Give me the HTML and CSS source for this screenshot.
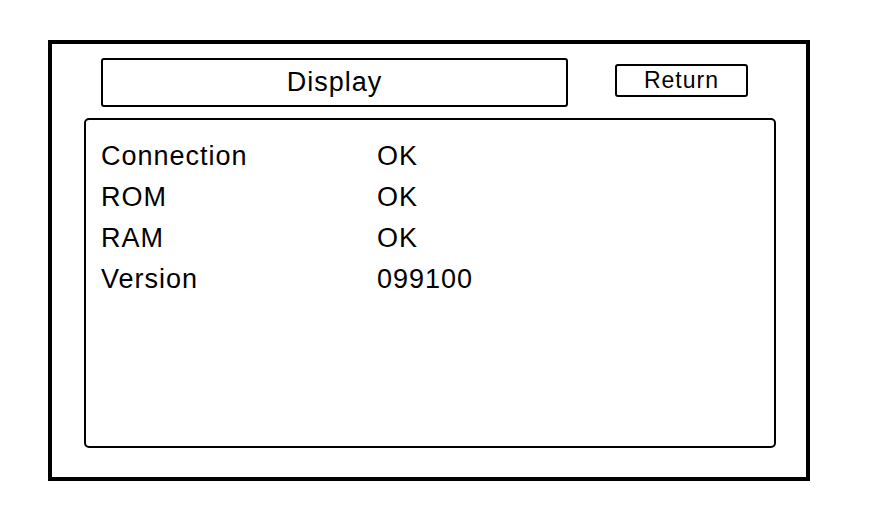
FILE: index.html
```html
<!DOCTYPE html>
<html lang="en">

<head>
    <meta charset="UTF-8">
    <meta name="viewport" content="width=device-width, initial-scale=1.0">
    <title>Display</title>
    <link rel="stylesheet" href="styles.css">
</head>

<body>

    <div class="frame">
        <div class="header">
            <div class="title">Display</div>
            <div class="return">Return</div>
        </div>
        <div class="panel">
            <ul class="status">
                <li><span class="label">Connection</span><span class="value">OK</span></li>
                <li><span class="label">ROM</span><span class="value">OK</span></li>
                <li><span class="label">RAM</span><span class="value">OK</span></li>
                <li><span class="label">Version</span><span class="value">099100</span></li>
            </ul>
        </div>
    </div>

</body>

</html>
```

FILE: styles.css
```css
html,
body,
ul {
    margin: 0;
    padding: 0;
}

body {
    background-color: #fff;
    color: #000;
    font-family: "Liberation Sans", Arial, sans-serif;
}

ul {
    list-style: none;
}

.frame {
    width: 762px;
    height: 441px;
    margin: 40px 0 0 48px;
    padding: 14px 0 0 32px;
    border: 4px solid #000;
    box-sizing: border-box;
}

.header {
    display: flex;
    align-items: flex-start;
    padding-left: 17px;
}

.title {
    display: flex;
    align-items: center;
    justify-content: center;
    width: 467px;
    height: 49px;
    border: 2px solid #000;
    border-radius: 3px;
    box-sizing: border-box;
    font-size: 27px;
    letter-spacing: 1px;
}

.return {
    display: flex;
    align-items: center;
    justify-content: center;
    width: 133px;
    height: 33px;
    margin: 6px 0 0 47px;
    border: 2px solid #000;
    border-radius: 3px;
    box-sizing: border-box;
    font-size: 23px;
    letter-spacing: 1px;
}

.panel {
    width: 692px;
    height: 330px;
    margin-top: 11px;
    padding: 16px 0 0 15px;
    border: 2px solid #000;
    border-radius: 5px;
    box-sizing: border-box;
}

.status li {
    display: flex;
    height: 41px;
    line-height: 41px;
    font-size: 27px;
    letter-spacing: 1px;
}

.label {
    width: 276px;
}
```
